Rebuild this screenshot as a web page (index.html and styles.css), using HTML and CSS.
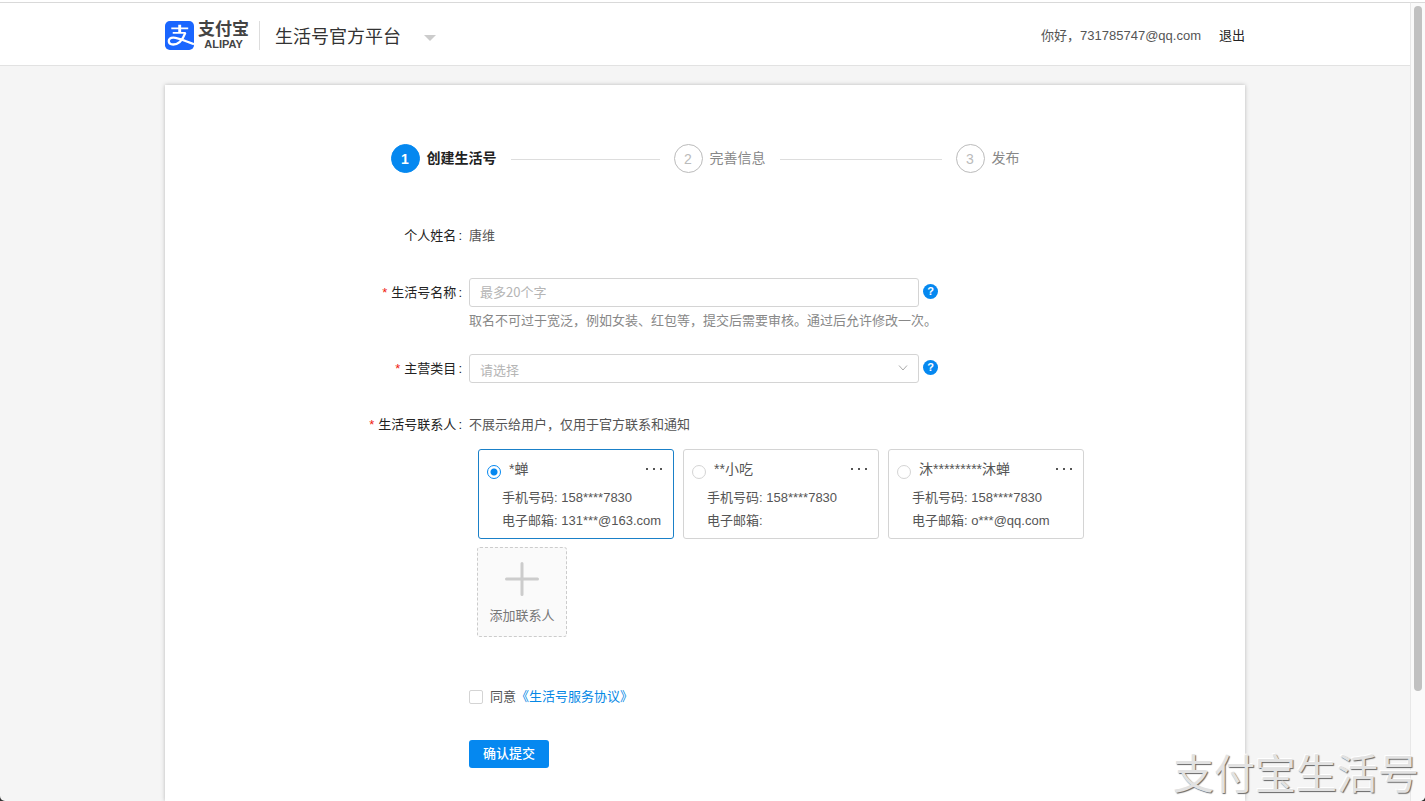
FILE: index.html
```html
<!DOCTYPE html>
<html lang="zh-CN">
<head>
<meta charset="utf-8">
<title>生活号官方平台</title>
<link rel="stylesheet" href="styles.css">
</head>
<body>
<div class="window">
  <div class="page">
    <header class="header">
      <div class="container header-inner">
        <a class="logo" href="#" aria-label="支付宝">
          <svg class="logo-mark" viewBox="0 0 30 30" aria-hidden="true">
            <rect width="30" height="30" rx="5" fill="#1a66ff"/>
            <g fill="none" stroke="#fff" stroke-linecap="butt">
              <path d="M15.2 4v8.500" stroke-width="3"/>
              <path d="M6.500 7.600h17.500" stroke-width="2"/>
              <path d="M8 12.300h13.500" stroke-width="2"/>
              <path d="M21 12.300C18.500 19 14 24.300 8.500 24.300C2.500 24.300 2.300 17.200 8.500 17.200C14 17.200 20 20.500 30 24" stroke-width="2.400"/>
            </g>
          </svg>
          <span class="logo-words">
            <span class="logo-cn">支付宝</span>
            <span class="logo-en">ALIPAY</span>
          </span>
        </a>
        <span class="divider"></span>
        <button class="platform" type="button">生活号官方平台<span class="caret"></span></button>
        <div class="account"><span>你好，731785747@qq.com</span><a class="logout" href="#">退出</a></div>
      </div>
    </header>

    <main class="container card">
      <ol class="steps">
        <li class="step step-active"><span class="step-num">1</span><span>创建生活号</span><i class="step-line"></i></li>
        <li class="step"><span class="step-num">2</span><span>完善信息</span><i class="step-line"></i></li>
        <li class="step"><span class="step-num">3</span><span>发布</span></li>
      </ol>

      <form class="form">
        <div class="row row-name">
          <span class="label">个人姓名<span class="colon">:</span></span>
          <span class="value">唐维</span>
        </div>
        <div class="row row-title">
          <label class="label" for="title"><span class="required">*</span>生活号名称<span class="colon">:</span></label>
          <div>
            <div class="control">
              <input class="field" id="title" type="text" placeholder="最多20个字">
              <button class="help" type="button" aria-label="名称帮助">?</button>
            </div>
            <p class="hint">取名不可过于宽泛，例如女装、红包等，提交后需要审核。通过后允许修改一次。</p>
          </div>
        </div>
        <div class="row row-category">
          <label class="label" for="category"><span class="required">*</span>主营类目<span class="colon">:</span></label>
          <div class="control">
            <div class="select">
              <select class="field" id="category"><option>请选择</option></select>
              <svg class="chevron" viewBox="0 0 10 6" aria-hidden="true"><path d="M1 .5l4 4.500 4-4.500" fill="none" stroke="#aaa"/></svg>
            </div>
            <button class="help" type="button" aria-label="类目帮助">?</button>
          </div>
        </div>
        <div class="row row-contacts">
          <span class="label"><span class="required">*</span>生活号联系人<span class="colon">:</span></span>
          <div>
            <p class="value">不展示给用户，仅用于官方联系和通知</p>
            <div class="contacts">
              <div class="contact contact-selected">
                <div class="contact-head">
                  <input class="radio" type="radio" name="contact" id="c1" checked>
                  <label class="contact-name" for="c1">*蝉</label>
                  <button class="more" type="button" aria-label="更多"><i></i><i></i><i></i></button>
                </div>
                <p class="contact-line">手机号码: 158****7830</p>
                <p class="contact-line">电子邮箱: 131***@163.com</p>
              </div>
              <div class="contact">
                <div class="contact-head">
                  <input class="radio" type="radio" name="contact" id="c2">
                  <label class="contact-name" for="c2">**小吃</label>
                  <button class="more" type="button" aria-label="更多"><i></i><i></i><i></i></button>
                </div>
                <p class="contact-line">手机号码: 158****7830</p>
                <p class="contact-line">电子邮箱:</p>
              </div>
              <div class="contact">
                <div class="contact-head">
                  <input class="radio" type="radio" name="contact" id="c3">
                  <label class="contact-name" for="c3">沐*********沐蝉</label>
                  <button class="more" type="button" aria-label="更多"><i></i><i></i><i></i></button>
                </div>
                <p class="contact-line">手机号码: 158****7830</p>
                <p class="contact-line">电子邮箱: o***@qq.com</p>
              </div>
            </div>
            <button class="add" type="button">
              <svg class="plus" viewBox="0 0 34 34" aria-hidden="true"><path d="M17 1.500v31M1.500 17h31" stroke="#ccc" stroke-width="3" stroke-linecap="round"/></svg>
              添加联系人
            </button>
          </div>
        </div>
        <div class="row row-agree">
          <div class="agree">
            <input class="checkbox" type="checkbox" id="agree">
            <label for="agree">同意</label><a class="link" href="#">《生活号服务协议》</a>
          </div>
        </div>
        <div class="row row-submit">
          <button class="submit" type="submit">确认提交</button>
        </div>
      </form>
    </main>
  </div>
  <div class="scroll-track"><div class="scroll-thumb"></div></div>
  <div class="watermark">支付宝生活号</div>
</div>
</body>
</html>
```
FILE: styles.css
```css
* {
  box-sizing: border-box;
}

html {
  background: #333;
}

body {
  margin: 0;
  font-family: "Liberation Sans", "Noto Sans CJK SC", sans-serif;
  font-size: 13px;
  line-height: 29px;
  color: #555;
}

p,
ol {
  margin: 0;
  padding: 0;
}

button,
input,
select {
  margin: 0;
  padding: 0;
  font: inherit;
  color: inherit;
}

button {
  border: 0;
  background: none;
  cursor: pointer;
}

a {
  text-decoration: none;
}

.window {
  position: relative;
  display: flex;
  height: 100vh;
  overflow: hidden;
  border-top: 2px solid #fff;
  border-radius: 0 0 5px 5px;
  background: #f5f5f5;
}

.page {
  flex: 1;
  display: flex;
  flex-direction: column;
  min-width: 0;
}

.container {
  width: 100%;
  max-width: 1080px;
  margin: 0 auto;
}

/* Header */
.header {
  background: #fff;
  border-top: 1px solid #d9d9d9;
  border-bottom: 1px solid #e2e2e2;
}

.header-inner {
  display: flex;
  align-items: center;
  height: 62px;
  padding-top: 3px;
}

.logo {
  display: flex;
  align-items: center;
  gap: 4px;
  color: #444;
}

.logo-mark {
  width: 29px;
  height: 29px;
}

.logo-words {
  display: flex;
  flex-direction: column;
  align-items: center;
  font-weight: bold;
  white-space: nowrap;
}

.logo-cn {
  font-size: 17px;
  line-height: 18px;
}

.logo-en {
  font-size: 11px;
  line-height: 11px;
}

.divider {
  width: 1px;
  height: 29px;
  margin: 0 15px 0 10px;
  background: #ddd;
}

.platform {
  display: flex;
  align-items: center;
  gap: 23px;
  padding-top: 4px;
  font-size: 18px;
  color: #333;
}

.caret {
  border: 6px solid transparent;
  border-top-color: #ccc;
  border-bottom: 0;
}

.account {
  display: flex;
  gap: 18px;
  margin-left: auto;
}

.logout {
  color: #222;
}

/* Card */
.card {
  flex: 1;
  margin-top: 19px;
  padding-top: 59px;
  background: #fff;
  box-shadow: 0 0 4px rgba(0, 0, 0, 0.25);
}

.steps {
  display: grid;
  grid-template-columns: 283px 282px auto;
  justify-content: center;
  list-style: none;
  font-size: 14px;
  color: #888;
}

.step {
  display: flex;
  align-items: center;
}

.step-num {
  width: 29px;
  height: 29px;
  margin-right: 7px;
  border: 1px solid #bbb;
  border-radius: 50%;
  line-height: 28px;
  text-align: center;
  color: #bbb;
}

.step-line {
  flex: 1;
  height: 1px;
  margin: 2px 14px 0;
  background: #ddd;
}

.step-active {
  font-weight: bold;
  color: #222;
}

.step-active .step-num {
  border-color: #0588f0;
  background: #0588f0;
  color: #fff;
}

/* Form */
.form {
  margin-top: 48px;
}

.row {
  display: grid;
  grid-template-columns: 297px 1fr;
  column-gap: 7px;
}

.label {
  text-align: right;
  color: #222;
}

.colon {
  margin-left: 2px;
}

.required {
  margin-right: 4px;
  color: #f02010;
}

.row-title {
  margin-top: 28px;
}

.row-category {
  margin-top: 19px;
}

.row-contacts {
  margin-top: 27px;
}

.row-agree {
  margin-top: 45px;
}

.row-submit {
  margin-top: 29px;
}

.control {
  display: flex;
  align-items: center;
  gap: 4px;
}

.field {
  width: 450px;
  height: 29px;
  padding: 0 10px 2px;
  border: 1px solid #d4d4d4;
  border-radius: 3px;
  background: #fff;
  font-family: "Noto Sans CJK SC", sans-serif;
  color: #b5b5b5;
}

.field::placeholder {
  color: #b5b5b5;
}

.select {
  position: relative;
  display: flex;
}

.select .field {
  appearance: none;
}

.chevron {
  position: absolute;
  top: 11px;
  right: 11px;
  width: 10px;
  height: 6px;
  pointer-events: none;
}

.help {
  width: 15px;
  height: 15px;
  margin-bottom: 2px;
  border-radius: 50%;
  background: #0588f0;
  font-size: 11px;
  font-weight: bold;
  line-height: 15px;
  color: #fff;
}

.hint {
  line-height: 28px;
  color: #888;
}

/* Contacts */
.contacts {
  display: flex;
  flex-wrap: wrap;
  gap: 9px;
  margin: 10px 0 8px 9px;
}

.contact {
  width: 196px;
  padding: 9px 10px 6px 8px;
  border: 1px solid #d4d4d4;
  border-radius: 3px;
}

.contact-selected {
  border-color: #1a80c8;
}

.contact-head {
  display: flex;
  align-items: center;
  height: 20px;
  margin-bottom: 7px;
  font-size: 14px;
  line-height: 20px;
}

.radio {
  appearance: none;
  width: 14px;
  height: 14px;
  margin: 6px 8px 0 0;
  border: 1px solid #d4d4d4;
  border-radius: 50%;
}

.radio:checked {
  border-color: #0588f0;
  background: radial-gradient(circle, #0588f0 3px, #fff 4px);
}

.more {
  display: flex;
  gap: 5px;
  margin-left: auto;
  padding: 4px 1px;
}

.more i {
  width: 2px;
  height: 2px;
  background: #555;
}

.contact-line {
  padding-left: 15px;
  line-height: 23px;
  white-space: nowrap;
}

.add {
  display: flex;
  flex-direction: column;
  align-items: center;
  gap: 8px;
  width: 90px;
  height: 90px;
  margin-left: 8px;
  padding-top: 14px;
  border: 1px dashed #ccc;
  border-radius: 3px;
  background: #fafafa;
  line-height: 23px;
  color: #777;
}

.plus {
  width: 34px;
  height: 34px;
}

/* Agreement and submit */
.agree,
.submit {
  grid-column: 2;
  justify-self: start;
}

.agree {
  display: flex;
  align-items: center;
}

.checkbox {
  appearance: none;
  width: 14px;
  height: 14px;
  margin-right: 7px;
  border: 1px solid #d4d4d4;
  border-radius: 2px;
}

.link {
  color: #0588e5;
}

.submit {
  height: 28px;
  padding: 0 14px;
  border-radius: 3px;
  background: #0588f0;
  line-height: 28px;
  font-weight: 500;
  color: #fff;
}

/* Scrollbar */
.scroll-track {
  width: 15px;
  padding: 3px;
  border-top: 1px solid #d9d9d9;
  border-left: 1px solid #e8e8e8;
  background: #fafafa;
}

.scroll-thumb {
  width: 8px;
  height: 86.5%;
  border-radius: 4px;
  background: #c1c1c1;
}

.watermark {
  position: absolute;
  right: 6px;
  bottom: 0;
  font-family: "Noto Sans CJK SC", sans-serif;
  font-size: 41px;
  line-height: 60px;
  color: #e2e2e2;
  text-shadow: 1px 1px 1px #666, -1px -1px 0 #fff;
  pointer-events: none;
}
```
